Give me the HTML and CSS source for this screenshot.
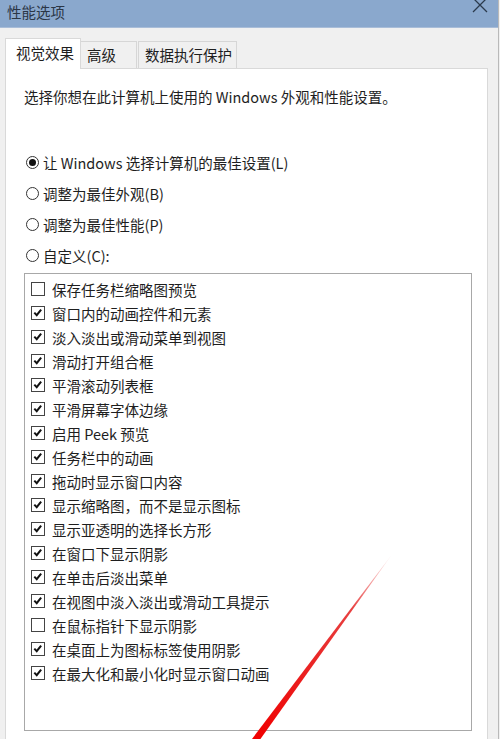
FILE: index.html
```html
<!DOCTYPE html>
<html lang="zh-CN">
<head>
<meta charset="utf-8">
<title>性能选项</title>
<link rel="stylesheet" href="styles.css">
</head>
<body>
<div class="window">
  <div class="titlebar">
    <span class="title">性能选项</span>
    <svg class="close" width="16" height="14" viewBox="0 0 16 14"><path d="M1 -2 L15 12 M15 -2 L1 12" stroke="#2b3a4d" stroke-width="1.3" fill="none"/></svg>
  </div>
  <div class="tabs">
    <div class="tab active">视觉效果</div>
    <div class="tab t2">高级</div>
    <div class="tab t3">数据执行保护</div>
  </div>
  <div class="panel">
    <p class="desc">选择你想在此计算机上使用的 Windows 外观和性能设置。</p>
    <div class="radios">
      <label class="radio"><span class="circle on"></span>让 Windows 选择计算机的最佳设置(L)</label>
      <label class="radio"><span class="circle"></span>调整为最佳外观(B)</label>
      <label class="radio"><span class="circle"></span>调整为最佳性能(P)</label>
      <label class="radio"><span class="circle"></span>自定义(C):</label>
    </div>
    <div class="listbox">
      <div class="item"><span class="box"></span>保存任务栏缩略图预览</div>
      <div class="item"><span class="box"><svg viewBox="0 0 13 13"><path d="M3 6.6 L5.6 9.3 L10.4 3.3"/></svg></span>窗口内的动画控件和元素</div>
      <div class="item"><span class="box"><svg viewBox="0 0 13 13"><path d="M3 6.6 L5.6 9.3 L10.4 3.3"/></svg></span>淡入淡出或滑动菜单到视图</div>
      <div class="item"><span class="box"><svg viewBox="0 0 13 13"><path d="M3 6.6 L5.6 9.3 L10.4 3.3"/></svg></span>滑动打开组合框</div>
      <div class="item"><span class="box"><svg viewBox="0 0 13 13"><path d="M3 6.6 L5.6 9.3 L10.4 3.3"/></svg></span>平滑滚动列表框</div>
      <div class="item"><span class="box"><svg viewBox="0 0 13 13"><path d="M3 6.6 L5.6 9.3 L10.4 3.3"/></svg></span>平滑屏幕字体边缘</div>
      <div class="item"><span class="box"><svg viewBox="0 0 13 13"><path d="M3 6.6 L5.6 9.3 L10.4 3.3"/></svg></span>启用 Peek 预览</div>
      <div class="item"><span class="box"><svg viewBox="0 0 13 13"><path d="M3 6.6 L5.6 9.3 L10.4 3.3"/></svg></span>任务栏中的动画</div>
      <div class="item"><span class="box"><svg viewBox="0 0 13 13"><path d="M3 6.6 L5.6 9.3 L10.4 3.3"/></svg></span>拖动时显示窗口内容</div>
      <div class="item"><span class="box"><svg viewBox="0 0 13 13"><path d="M3 6.6 L5.6 9.3 L10.4 3.3"/></svg></span>显示缩略图，而不是显示图标</div>
      <div class="item"><span class="box"><svg viewBox="0 0 13 13"><path d="M3 6.6 L5.6 9.3 L10.4 3.3"/></svg></span>显示亚透明的选择长方形</div>
      <div class="item"><span class="box"><svg viewBox="0 0 13 13"><path d="M3 6.6 L5.6 9.3 L10.4 3.3"/></svg></span>在窗口下显示阴影</div>
      <div class="item"><span class="box"><svg viewBox="0 0 13 13"><path d="M3 6.6 L5.6 9.3 L10.4 3.3"/></svg></span>在单击后淡出菜单</div>
      <div class="item"><span class="box"><svg viewBox="0 0 13 13"><path d="M3 6.6 L5.6 9.3 L10.4 3.3"/></svg></span>在视图中淡入淡出或滑动工具提示</div>
      <div class="item"><span class="box"></span>在鼠标指针下显示阴影</div>
      <div class="item"><span class="box"><svg viewBox="0 0 13 13"><path d="M3 6.6 L5.6 9.3 L10.4 3.3"/></svg></span>在桌面上为图标标签使用阴影</div>
      <div class="item"><span class="box"><svg viewBox="0 0 13 13"><path d="M3 6.6 L5.6 9.3 L10.4 3.3"/></svg></span>在最大化和最小化时显示窗口动画</div>
    </div>
  </div>
</div>
<svg class="arrow" width="500" height="739" viewBox="0 0 500 739">
  <defs>
    <linearGradient id="fade" gradientUnits="userSpaceOnUse" x1="393" y1="553" x2="256" y2="739">
      <stop offset="0" stop-color="#e00000" stop-opacity="0"/>
      <stop offset="0.3" stop-color="#e00000" stop-opacity="0.75"/>
      <stop offset="1" stop-color="#f00000" stop-opacity="1"/>
    </linearGradient>
  </defs>
  <polygon points="393,553 259,741 252,739" fill="url(#fade)"/>
</svg>
</body>
</html>
```

FILE: styles.css
```css
html, body {
  margin: 0;
  padding: 0;
  height: 739px;
  overflow: hidden;
  background: #f0f0f0;
}
body {
  font-family: "Noto Sans CJK SC", "Noto Sans", sans-serif;
  font-size: 14.5px;
  color: #1e1e1e;
  position: relative;
}
.window {
  width: 498px;
  height: 739px;
  border-right: 1px solid #b9b9b9;
  background: #f0f0f0;
  display: flex;
  flex-direction: column;
}
.titlebar {
  height: 28px;
  flex: none;
  background: #8aa8cd;
  display: flex;
  justify-content: space-between;
  align-items: flex-start;
  padding: 0 10px 0 7px;
  border-bottom: 1px solid #a9bdd8;
  box-sizing: border-box;
}
.title {
  line-height: 24px;
  font-size: 14.5px;
  color: #2b3646;
}
.close {
  display: block;
}
.tabs {
  display: flex;
  flex: none;
  align-items: flex-end;
  margin: 10px 0 0 5px;
  height: 30px;
  position: relative;
  z-index: 1;
}
.tab {
  box-sizing: border-box;
  height: 27px;
  line-height: 25px;
  border: 1px solid #d6d6d6;
  border-bottom: none;
  background: #f0f0f0;
  padding-left: 6px;
  white-space: nowrap;
}
.tab.active {
  width: 76px;
  height: 31px;
  line-height: 27px;
  padding-left: 10px;
  background: #fff;
  margin-bottom: -1px;
  border-color: #d9d9d9;
}
.tab.t2 {
  width: 56px;
  border-left: none;
}
.tab.t3 {
  width: 99px;
  margin-left: 1px;
}
.panel {
  flex: 1;
  min-height: 0;
  overflow: hidden;
  margin: 0 10px 0 5px;
  border: 1px solid #d9d9d9;
  border-bottom: none;
  background: #fff;
  padding: 0 0 0 18px;
}
.desc {
  margin: 0;
  padding-top: 18px;
  line-height: 20px;
}
.radios {
  margin-top: 40px;
  display: flex;
  flex-direction: column;
}
.radio {
  display: flex;
  align-items: center;
  height: 31px;
  padding-left: 2px;
  gap: 4px;
}
.circle {
  width: 11px;
  height: 11px;
  border: 1px solid #333;
  border-radius: 50%;
  display: flex;
  align-items: center;
  justify-content: center;
  flex: none;
}
.circle.on::after {
  content: "";
  width: 7px;
  height: 7px;
  border-radius: 50%;
  background: #111;
}
.listbox {
  margin-top: 2px;
  width: 446px;
  height: 453px;
  border: 1px solid #a8a8a8;
  padding-top: 3px;
}
.item {
  display: flex;
  align-items: center;
  height: 24px;
  padding-left: 6px;
  gap: 7px;
  white-space: nowrap;
}
.box {
  width: 12px;
  height: 12px;
  border: 1px solid #444;
  flex: none;
  background: #fff;
}
.box svg {
  display: block;
  width: 12px;
  height: 12px;
  overflow: visible;
}
.box svg path {
  fill: none;
  stroke: #111;
  stroke-width: 2.2;
  transform: translate(-0.5px, -0.5px);
}
.arrow {
  position: absolute;
  top: 0;
  left: 0;
  pointer-events: none;
}
```
